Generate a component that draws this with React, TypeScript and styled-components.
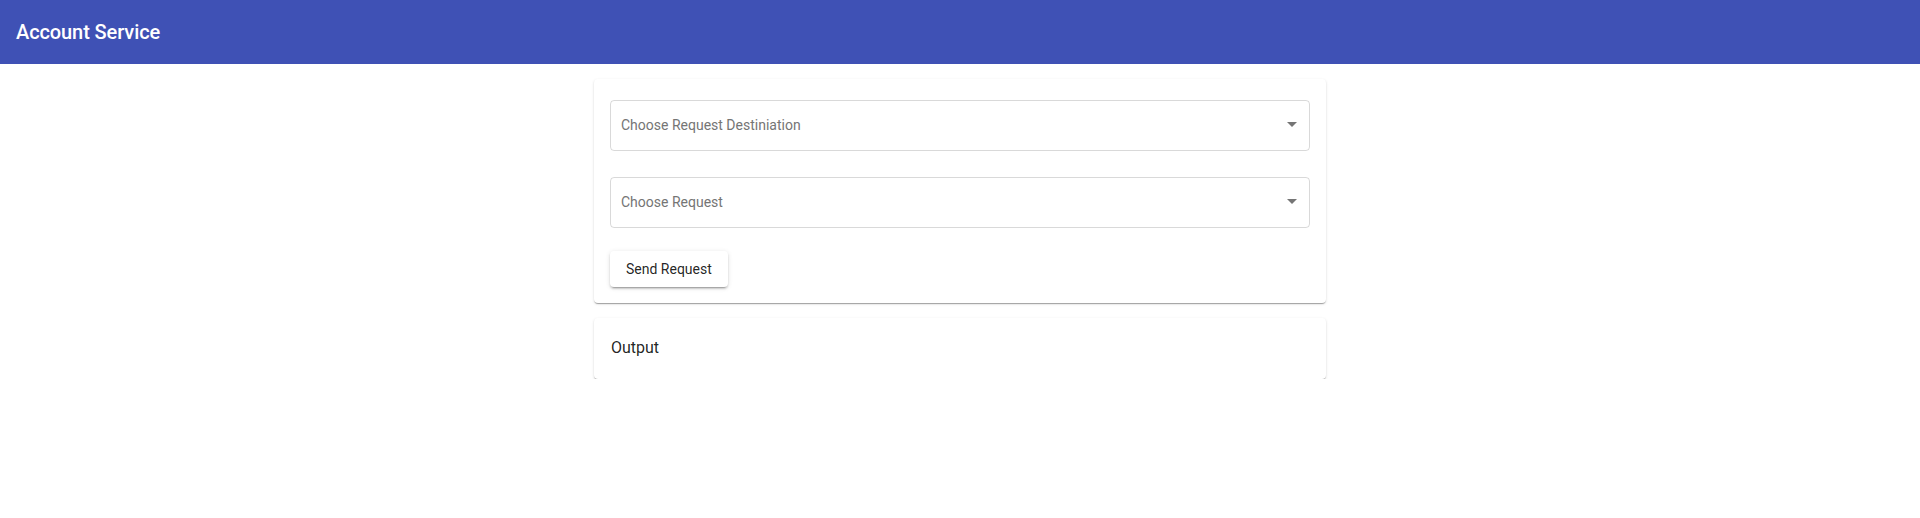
import styled, {createGlobalStyle} from 'styled-components';

const GlobalStyle = createGlobalStyle`
  body {
    margin: 0;
    font-family: Roboto, "Liberation Sans", sans-serif;
    background: #fff;
    color: rgba(0, 0, 0, 0.87);
  }
`;

const AppBar = styled.header`
  height: 64px;
  background: #3f51b5;
  display: flex;
  align-items: center;
  padding: 0 16px;
  box-sizing: border-box;
`;

const Title = styled.h1`
  margin: 0;
  font-size: 20px;
  font-weight: 500;
  color: #fff;
  letter-spacing: -0.1px;
`;

const Main = styled.main`
  width: 732px;
  margin: 15px auto 0;
  display: flex;
  flex-direction: column;
  gap: 15px;
`;

const Card = styled.section`
  background: #fff;
  border-radius: 4px;
  box-shadow: 0 2px 1px -1px rgba(0, 0, 0, 0.2), 0 1px 1px 0 rgba(0, 0, 0, 0.14), 0 1px 3px 0 rgba(0, 0, 0, 0.12);
  padding: 21px 16px 16px;
  display: flex;
  flex-direction: column;
  align-items: flex-start;
`;

const SelectBox = styled.div`
  width: 100%;
  height: 51px;
  box-sizing: border-box;
  border: 1px solid rgba(0, 0, 0, 0.15);
  border-radius: 4px;
  display: flex;
  align-items: center;
  padding: 0 12px 2px 10px;
  margin-bottom: 26px;
  font-size: 14px;
  color: #757575;
`;

const Placeholder = styled.span`
  flex: 1;
`;

const Button = styled.button`
  height: 36px;
  padding: 0 16px;
  border: none;
  border-radius: 4px;
  background: #fff;
  font-family: inherit;
  font-size: 14px;
  font-weight: 400;
  color: rgba(0, 0, 0, 0.87);
  box-shadow: 0 3px 1px -2px rgba(0, 0, 0, 0.2), 0 2px 2px 0 rgba(0, 0, 0, 0.14), 0 1px 5px 0 rgba(0, 0, 0, 0.12);
  margin-top: -3px;
`;

const OutputCard = styled(Card)`
  padding: 0 17px 2px;
  height: 61px;
  box-sizing: border-box;
  justify-content: center;
  font-size: 16px;
`;

const Arrow = () => (
  <svg width="10" height="5" viewBox="0 0 10 5">
    <path d="M0 0h10L5 5z" fill="#757575" />
  </svg>
);

const Select = ({placeholder}: {placeholder: string}) => (
  <SelectBox>
    <Placeholder>{placeholder}</Placeholder>
    <Arrow />
  </SelectBox>
);

export default function App() {
  return (
    <>
      <GlobalStyle />
      <AppBar>
        <Title>Account Service</Title>
      </AppBar>
      <Main>
        <Card>
          <Select placeholder="Choose Request Destiniation" />
          <Select placeholder="Choose Request" />
          <Button>Send Request</Button>
        </Card>
        <OutputCard>Output</OutputCard>
      </Main>
    </>
  );
}
